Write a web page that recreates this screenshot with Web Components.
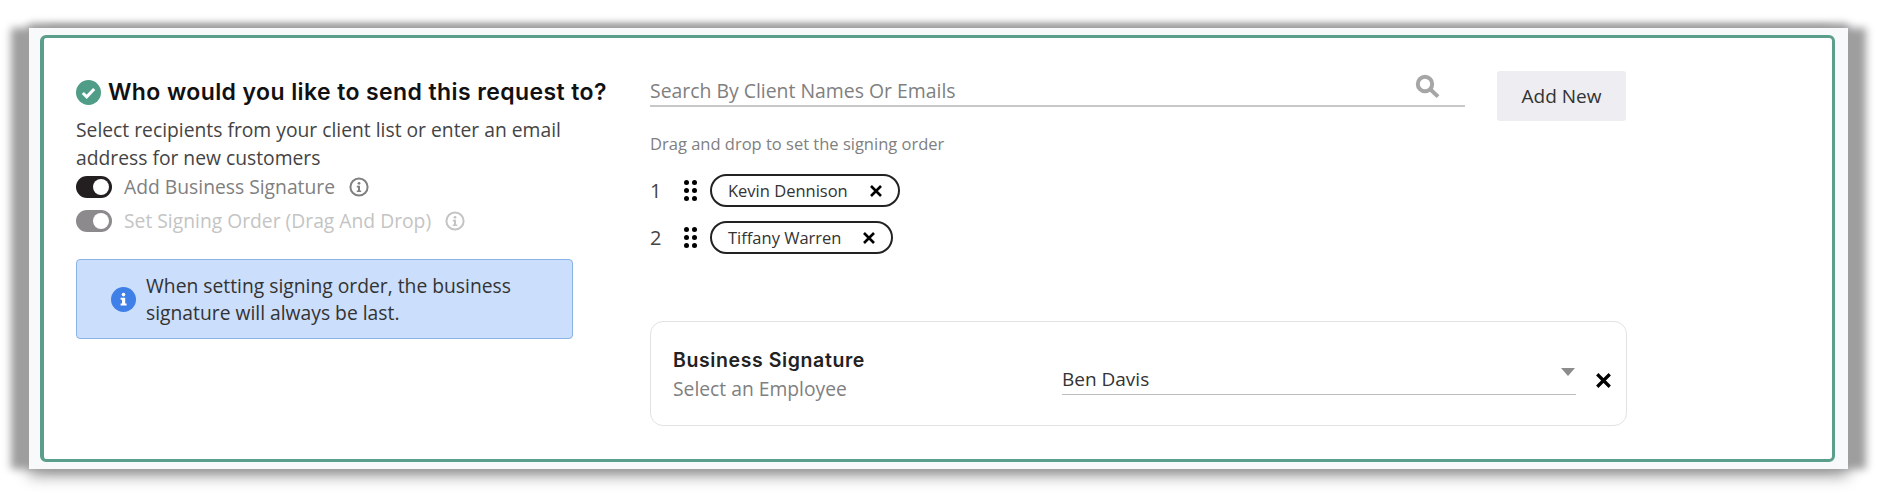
<!DOCTYPE html>
<html lang="en">
<head>
<meta charset="utf-8">
<title>Request recipients</title>
<style>
  html, body { margin: 0; background: #fff; }
  body { width: 1882px; height: 498px; overflow: hidden; font-family: "Open Sans", sans-serif; }
</style>
</head>
<body>
<request-panel>
  <div slot="left">
    <request-title>Who would you like to send this request to?</request-title>
    <help-text>Select recipients from your client list or enter an email address for new customers</help-text>
    <toggle-row>Add Business Signature</toggle-row>
    <toggle-row disabled>Set Signing Order (Drag And Drop)</toggle-row>
    <info-note>When setting signing order, the business signature will always be last.</info-note>
  </div>
  <div slot="right">
    <search-row></search-row>
    <signer-list>
      <signer-row index="1" name="Kevin Dennison"></signer-row>
      <signer-row index="2" name="Tiffany Warren"></signer-row>
    </signer-list>
    <signature-card value="Ben Davis"></signature-card>
  </div>
</request-panel>

<script>
const closeIcon = (size) => `
  <svg width="${size}" height="${size}" viewBox="0 0 12 12" aria-hidden="true">
    <path d="M1 1L11 11M11 1L1 11" stroke="#000" stroke-width="2.6" fill="none"/>
  </svg>`;

const infoOutline = (color) => `
  <svg width="20" height="20" viewBox="0 0 20 20" aria-hidden="true">
    <circle cx="10" cy="10" r="8.6" fill="none" stroke="${color}" stroke-width="2"/>
    <circle cx="10" cy="6.3" r="1.4" fill="${color}"/>
    <path d="M7.8 8.8H11V13.4H12.2V15H7.8V13.4H9V10.4H7.8Z" fill="${color}"/>
  </svg>`;

class RequestPanel extends HTMLElement {
  constructor() {
    super();
    this.attachShadow({ mode: "open" });
    this.shadowRoot.innerHTML = `
      <style>
        :host {
          display: block;
          box-sizing: border-box;
          width: 1819px;
          height: 441px;
          margin: 28px 0 0 29px;
          padding: 7px 13px 7px 11px;
          background: #f7f9fb;
          box-shadow: -18px 0 8px #9e9e9e, 18px 0 8px #9e9e9e, 0 -4px 8px #9e9e9e, 0 7px 14px #9e9e9e;
        }
        .box {
          box-sizing: border-box;
          height: 100%;
          display: flex;
          background: #fff;
          border: 3px solid #5a9e8b;
          border-left-width: 4px;
          border-radius: 6px;
          padding: 0 0 0 32px;
        }
        .left { width: 574px; flex: none; }
        .right { width: 976px; flex: none; }
      </style>
      <div class="box">
        <div class="left"><slot name="left"></slot></div>
        <div class="right"><slot name="right"></slot></div>
      </div>`;
  }
}

class RequestTitle extends HTMLElement {
  constructor() {
    super();
    this.attachShadow({ mode: "open" });
    this.shadowRoot.innerHTML = `
      <style>
        :host {
          display: flex;
          align-items: center;
          gap: 7px;
          margin-top: 40px;
          font: 600 23px/28px Inter, sans-serif;
          letter-spacing: 0.4px;
          color: #111;
          white-space: nowrap;
        }
        svg { flex: none; }
      </style>
      <svg width="25" height="25" viewBox="0 0 25 25" aria-hidden="true">
        <circle cx="12.5" cy="12.5" r="12.5" fill="#4f9d87"/>
        <path d="M6.8 13L10.7 16.8L18.2 9" fill="none" stroke="#fff" stroke-width="3"/>
      </svg>
      <span><slot></slot></span>`;
  }
}

class HelpText extends HTMLElement {
  constructor() {
    super();
    this.attachShadow({ mode: "open" });
    this.shadowRoot.innerHTML = `
      <style>
        :host {
          display: block;
          width: 500px;
          margin-top: 10px;
          font: 400 19.3px/27.5px "Open Sans", sans-serif;
          color: #444;
        }
      </style>
      <slot></slot>`;
  }
}

class ToggleRow extends HTMLElement {
  constructor() {
    super();
    this.attachShadow({ mode: "open" });
    const muted = this.hasAttribute("disabled");
    this.shadowRoot.innerHTML = `
      <style>
        :host {
          display: flex;
          align-items: center;
          height: 33px;
          margin-top: ${muted ? "1px" : "-1px"};
          font: 400 19.3px/22px "Open Sans", sans-serif;
          color: ${muted ? "#c4c4c4" : "#808080"};
          white-space: nowrap;
        }
        .track {
          box-sizing: border-box;
          width: 36px;
          height: 22px;
          flex: none;
          display: flex;
          justify-content: flex-end;
          align-items: center;
          padding-right: 3px;
          border-radius: 11px;
          background: ${muted ? "#8c8a8c" : "#231f20"};
          margin-right: 12px;
        }
        .knob { width: 16px; height: 16px; border-radius: 50%; background: #fff; }
        svg { margin-left: 14px; flex: none; }
      </style>
      <span class="track"><span class="knob"></span></span>
      <span><slot></slot></span>
      ${infoOutline(muted ? "#c4c4c4" : "#808080")}`;
  }
}

class InfoNote extends HTMLElement {
  constructor() {
    super();
    this.attachShadow({ mode: "open" });
    this.shadowRoot.innerHTML = `
      <style>
        :host {
          display: flex;
          align-items: center;
          box-sizing: border-box;
          width: 497px;
          height: 80px;
          margin-top: 22px;
          padding: 0 40px 0 34px;
          gap: 10px;
          background: #cbdefb;
          border: 1px solid #8ab4e8;
          border-radius: 4px;
          font: 400 19.3px/27.5px "Open Sans", sans-serif;
          color: #333;
        }
        svg { flex: none; }
      </style>
      <svg width="25" height="25" viewBox="0 0 25 25" aria-hidden="true">
        <circle cx="12.5" cy="12.5" r="12.5" fill="#3f7fe8"/>
        <circle cx="12.5" cy="7.6" r="1.8" fill="#fff"/>
        <path d="M9.6 10.8H14.2V16.6H15.6V18.6H9.6V16.6H11V12.8H9.6Z" fill="#fff"/>
      </svg>
      <span><slot></slot></span>`;
  }
}

class SearchRow extends HTMLElement {
  constructor() {
    super();
    this.attachShadow({ mode: "open" });
    this.shadowRoot.innerHTML = `
      <style>
        :host {
          display: flex;
          align-items: flex-start;
          padding-top: 33px;
          font-family: "Open Sans", sans-serif;
        }
        .field {
          box-sizing: border-box;
          width: 815px;
          height: 36px;
          margin-right: 32px;
          display: flex;
          justify-content: space-between;
          align-items: center;
          padding: 5px 24px 0 0;
          border-bottom: 2px solid #c8c8c8;
          font-size: 19.4px;
          color: #808080;
        }
        .field svg { margin: -9px 1px 0 0; }
        button {
          width: 129px;
          height: 50px;
          border: 0;
          border-radius: 3px;
          background: #ededf2;
          font: 400 19px "Open Sans", sans-serif;
          color: #333;
          padding: 0;
        }
      </style>
      <div class="field">
        <span>Search By Client Names Or Emails</span>
        <svg width="25" height="25" viewBox="0 0 25 25" aria-hidden="true">
          <circle cx="10" cy="10" r="7.2" fill="none" stroke="#a6a6a6" stroke-width="4"/>
          <path d="M15.2 15.2L23 22.6" stroke="#a6a6a6" stroke-width="4" fill="none"/>
        </svg>
      </div>
      <button type="button">Add New</button>`;
  }
}

class SignerList extends HTMLElement {
  constructor() {
    super();
    this.attachShadow({ mode: "open" });
    this.shadowRoot.innerHTML = `
      <style>
        :host {
          display: block;
          font: 400 16.5px/22px "Open Sans", sans-serif;
          color: #808080;
        }
        .hint { margin: 12px 0 19px; }
        .rows { display: flex; flex-direction: column; gap: 14px; }
      </style>
      <div class="hint">Drag and drop to set the signing order</div>
      <div class="rows"><slot></slot></div>`;
  }
}

class SignerRow extends HTMLElement {
  constructor() {
    super();
    this.attachShadow({ mode: "open" });
    const dots = [0, 1, 2].map((row) => [0, 1].map((col) =>
      `<circle cx="${2.5 + col * 8}" cy="${2.5 + row * 8}" r="2.5" fill="#000"/>`).join("")).join("");
    this.shadowRoot.innerHTML = `
      <style>
        :host {
          display: flex;
          align-items: center;
          height: 33px;
          font: 400 20px "Open Sans", sans-serif;
          color: #444;
        }
        .num { width: 34px; }
        svg.grip { margin-right: 13px; }
        .chip {
          box-sizing: border-box;
          height: 33px;
          display: flex;
          align-items: center;
          gap: 22px;
          padding: 0 16px 0 16px;
          border: 2px solid #222;
          border-radius: 17px;
          font-size: 16.5px;
          color: #333;
        }
      </style>
      <span class="num">${this.getAttribute("index")}</span>
      <svg class="grip" width="13" height="21" viewBox="0 0 13 21" aria-hidden="true">${dots}</svg>
      <span class="chip">
        <span>${this.getAttribute("name")}</span>
        ${closeIcon(12)}
      </span>`;
  }
}

class SignatureCard extends HTMLElement {
  constructor() {
    super();
    this.attachShadow({ mode: "open" });
    this.shadowRoot.innerHTML = `
      <style>
        :host {
          display: flex;
          align-items: center;
          box-sizing: border-box;
          width: 977px;
          height: 105px;
          margin-top: 67px;
          padding: 0 0 0 22px;
          background: #fff;
          border: 1px solid #e2e2e2;
          border-radius: 13px;
          font-family: "Open Sans", sans-serif;
        }
        .label { width: 389px; flex: none; margin-top: 3px; }
        .title { font: 600 19.5px/26px Inter, sans-serif; color: #222; letter-spacing: 0.6px; }
        .sub { font-size: 19.3px; line-height: 31px; color: #808080; }
        .select {
          box-sizing: border-box;
          width: 514px;
          height: 32px;
          margin: 10px 20px 0 0;
          padding-top: 2px;
          display: flex;
          justify-content: space-between;
          align-items: flex-start;
          border-bottom: 1px solid #bdbdbd;
          font-size: 19px;
          line-height: 28px;
          color: #333;
          flex: none;
        }
        .arrow {
          width: 0;
          height: 0;
          margin: 3px 1px 0 0;
          border-left: 7px solid transparent;
          border-right: 7px solid transparent;
          border-top: 8px solid #8c8c8c;
        }
        svg { flex: none; margin-top: 14px; }
      </style>
      <div class="label">
        <div class="title">Business Signature</div>
        <div class="sub">Select an Employee</div>
      </div>
      <div class="select">
        <span>${this.getAttribute("value")}</span>
        <span class="arrow"></span>
      </div>
      ${closeIcon(15)}`;
  }
}

customElements.define("request-panel", RequestPanel);
customElements.define("request-title", RequestTitle);
customElements.define("help-text", HelpText);
customElements.define("toggle-row", ToggleRow);
customElements.define("info-note", InfoNote);
customElements.define("search-row", SearchRow);
customElements.define("signer-list", SignerList);
customElements.define("signer-row", SignerRow);
customElements.define("signature-card", SignatureCard);
</script>
</body>
</html>
